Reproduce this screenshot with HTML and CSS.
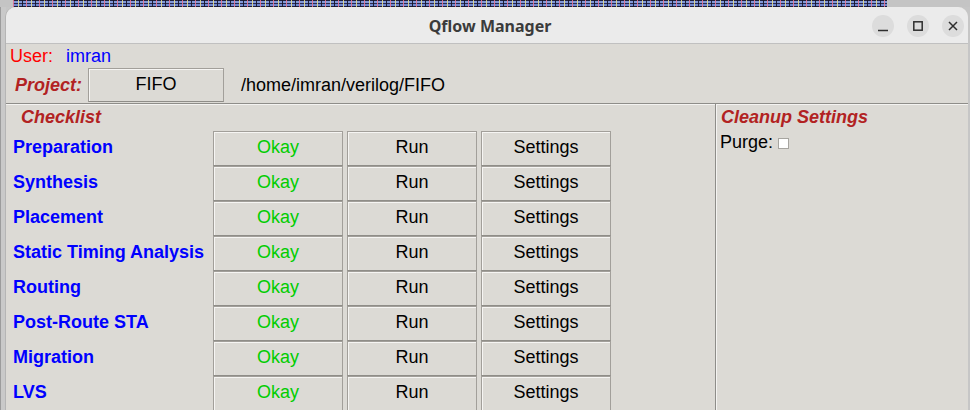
FILE: index.html
```html
<!DOCTYPE html>
<html>
<head>
<meta charset="utf-8">
<link rel="stylesheet" href="styles.css">
</head>
<body>
<div class="desk-top">
  <div class="desk-gray left"></div>
  <div class="desk-noise"></div>
  <div class="desk-gray right"></div>
</div>
<div class="screen">
  <div class="gutter"></div>
  <div class="window">
    <div class="titlebar">
      <div></div>
      <div class="title">Qflow Manager</div>
      <div class="wm-buttons">
        <div class="wm-btn"><svg width="22" height="22" viewBox="0 0 22 22"><path d="M6 15.5h10" stroke="#2e2e2e" stroke-width="1.6" fill="none"/></svg></div>
        <div class="wm-btn"><svg width="22" height="22" viewBox="0 0 22 22"><rect x="6.8" y="6.8" width="8.4" height="8.4" stroke="#2e2e2e" stroke-width="1.5" fill="none"/></svg></div>
        <div class="wm-btn"><svg width="22" height="22" viewBox="0 0 22 22"><path d="M7 7l8 8M15 7l-8 8" stroke="#2e2e2e" stroke-width="1.5" fill="none"/></svg></div>
      </div>
    </div>
    <div class="user-row"><span class="user-label">User:</span><span class="user-name">imran</span></div>
    <div class="project-row">
      <span class="project-label">Project:</span>
      <div class="tkbtn project-btn">FIFO</div>
      <span class="project-path">/home/imran/verilog/FIFO</span>
    </div>
    <div class="main">
      <div class="checklist">
        <div class="frame-title">Checklist</div>
        <div class="rows">
          <div class="step">Preparation</div><div class="tkbtn okay">Okay</div><div class="tkbtn">Run</div><div class="tkbtn">Settings</div>
          <div class="step">Synthesis</div><div class="tkbtn okay">Okay</div><div class="tkbtn">Run</div><div class="tkbtn">Settings</div>
          <div class="step">Placement</div><div class="tkbtn okay">Okay</div><div class="tkbtn">Run</div><div class="tkbtn">Settings</div>
          <div class="step">Static Timing Analysis</div><div class="tkbtn okay">Okay</div><div class="tkbtn">Run</div><div class="tkbtn">Settings</div>
          <div class="step">Routing</div><div class="tkbtn okay">Okay</div><div class="tkbtn">Run</div><div class="tkbtn">Settings</div>
          <div class="step">Post-Route STA</div><div class="tkbtn okay">Okay</div><div class="tkbtn">Run</div><div class="tkbtn">Settings</div>
          <div class="step">Migration</div><div class="tkbtn okay">Okay</div><div class="tkbtn">Run</div><div class="tkbtn">Settings</div>
          <div class="step">LVS</div><div class="tkbtn okay">Okay</div><div class="tkbtn">Run</div><div class="tkbtn">Settings</div>
        </div>
      </div>
      <div class="cleanup">
        <div class="frame-title cleanup-title">Cleanup Settings</div>
        <div class="purge">Purge: <span class="checkbox"></span></div>
      </div>
    </div>
  </div>
</div>
</body>
</html>
```
FILE: styles.css
```css
html, body {
  margin: 0;
  padding: 0;
}
body {
  width: 970px;
  height: 410px;
  overflow: hidden;
  background: #c6c6c6;
  font-family: "Liberation Sans", Arial, sans-serif;
  font-size: 18px;
  color: #000;
}
.desk-top {
  display: flex;
  height: 7px;
}
.desk-gray {
  background: #c4c4c4;
}
.desk-gray.left { width: 13px; }
.desk-gray.right { flex: 1; }
.desk-noise {
  width: 874px;
  background:
    repeating-linear-gradient(90deg, rgba(240,120,150,0.85) 0 1px, transparent 1px 5px, rgba(235,225,140,0.85) 5px 6px, transparent 6px 9px, rgba(20,20,40,0.9) 9px 10px, transparent 10px 13px),
    repeating-linear-gradient(0deg, #1c1c38 0 1px, #7088d0 1px 3px, #2a2a50 3px 4px, #8098d8 4px 6px, #20203c 6px 7px);
}
.screen {
  display: flex;
  height: 403px;
}
.gutter {
  width: 6px;
  background: #c9c9c9;
  border-left: 1px solid #9c9c9c;
  box-sizing: border-box;
}
.window {
  width: 962px;
  background: #dcdad5;
  border-radius: 10px 10px 0 0;
  overflow: hidden;
  box-shadow: -1px 0 0 #b5b5b5;
}
.titlebar {
  height: 36px;
  background: #ebebeb;
  border-bottom: 1px solid #c0c0c0;
  display: grid;
  grid-template-columns: 1fr auto 1fr;
  align-items: center;
}
.title {
  font-family: "Noto Sans", "Open Sans", sans-serif;
  font-weight: 700;
  font-size: 16px;
  color: #3b3b3b;
  padding-left: 6px;
  padding-top: 2px;
}
.wm-buttons {
  justify-self: end;
  display: flex;
  gap: 13px;
  padding-right: 4px;
  padding-top: 2px;
}
.wm-btn {
  width: 22px;
  height: 22px;
  border-radius: 50%;
  background: #dcdcdc;
}
.wm-btn svg { display: block; }
.user-row {
  height: 23px;
  line-height: 24px;
  padding-left: 4px;
}
.user-label { color: #ff0000; }
.user-name { color: #0000ff; margin-left: 13px; }
.project-row {
  display: flex;
  align-items: center;
  height: 36px;
  padding-left: 9px;
}
.project-label {
  width: 73px;
  color: #b22222;
  font-weight: 700;
  font-style: italic;
}
.tkbtn {
  box-sizing: border-box;
  height: 35px;
  display: flex;
  align-items: center;
  justify-content: center;
  background: #dcdad5;
  border: 1px solid #a29f9a;
  border-bottom-color: #8f8d88;
  box-shadow: inset 1px 1px 0 #f6f5f3;
  padding-bottom: 3px;
}
.project-btn {
  width: 136px;
  height: 34px;
  padding-bottom: 1px;
}
.project-path {
  margin-left: 17px;
}
.main {
  display: flex;
  border-top: 1px solid #8e8d89;
  box-shadow: inset 0 1px 0 #f4f3f1;
  height: 400px;
}
.checklist {
  width: 709px;
  border-right: 1px solid #8e8d89;
}
.frame-title {
  color: #b22222;
  font-weight: 700;
  font-style: italic;
  height: 26px;
  line-height: 26px;
  padding-left: 15px;
}
.rows {
  margin-top: 1px;
  display: grid;
  grid-template-columns: 196px 130px 130px 130px;
  grid-auto-rows: 35px;
  column-gap: 4px;
  padding-left: 7px;
}
.step {
  color: #0000ff;
  font-weight: 700;
  display: flex;
  align-items: center;
  padding-bottom: 2px;
}
.okay { color: #00cd00; }
.cleanup {
  flex: 1;
  border-left: 1px solid #f4f3f1;
  padding-left: 3px;
}
.cleanup-title {
  padding-left: 1px;
}
.purge {
  line-height: 18px;
  margin-top: 3px;
}
.checkbox {
  display: inline-block;
  width: 9px;
  height: 9px;
  background: #ffffff;
  border: 1px solid #a7a5a0;
  vertical-align: -1px;
}
```
